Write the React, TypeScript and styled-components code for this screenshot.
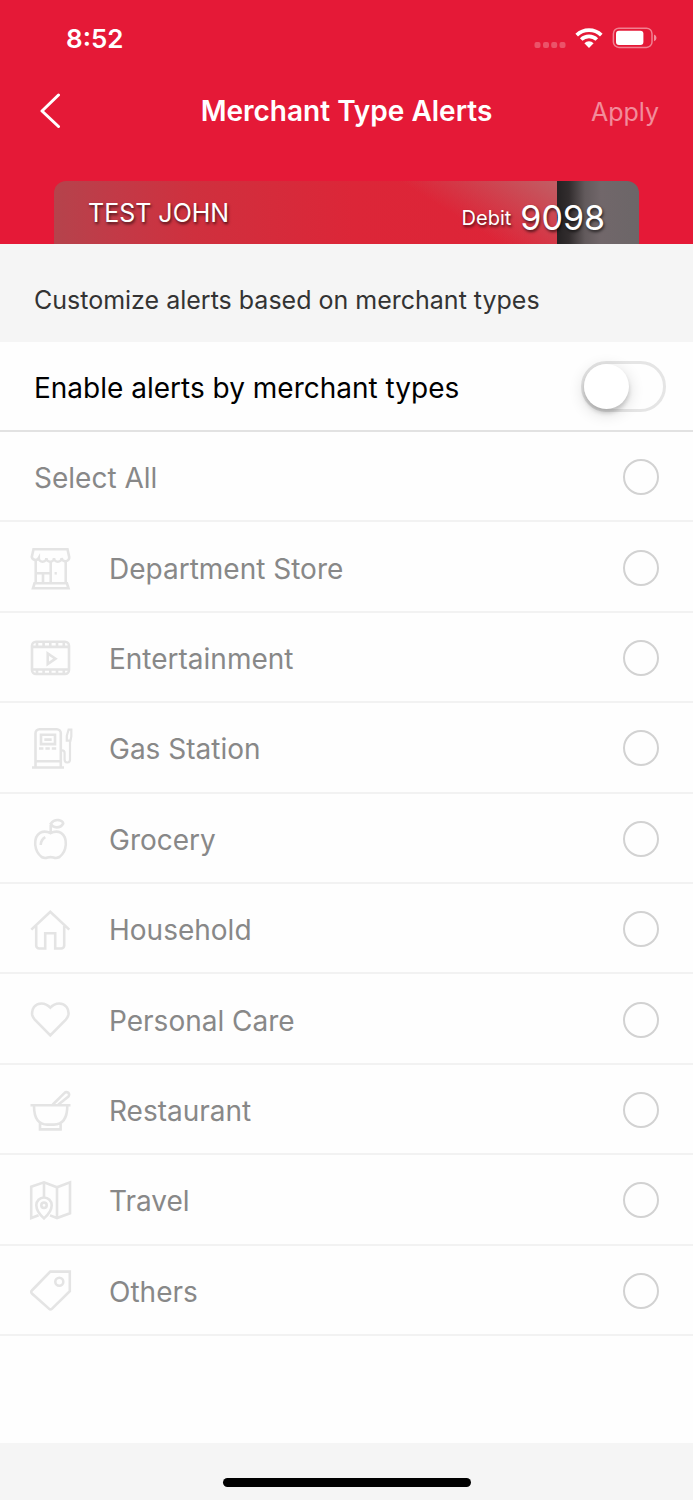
import React from "react";
import styled, { createGlobalStyle } from "styled-components";

const GlobalStyle = createGlobalStyle`
  *, *::before, *::after { box-sizing: border-box; }
  body { margin: 0; background: #fefefe; }
  body, button, input { font-family: Inter, "Liberation Sans", sans-serif; }
`;

const Page = styled.div`
  display: flex;
  flex-direction: column;
  min-height: 100vh;
  background: #fefefe;
`;

const Header = styled.header`
  background: #e51937;
  color: #fff;
`;

const StatusBar = styled.div`
  display: flex;
  align-items: center;
  justify-content: space-between;
  height: 76px;
  padding: 0 36px 0 66px;
`;

const Time = styled.time`
  font-size: 26px;
  font-weight: 600;
`;

const StatusIcons = styled.div`
  display: flex;
  align-items: center;
  gap: 9px;
`;

const NavBar = styled.nav`
  display: grid;
  grid-template-columns: 110px 1fr 110px;
  align-items: center;
  height: 70px;
  padding: 0 34px;
`;

const BackButton = styled.button`
  justify-self: start;
  display: flex;
  padding: 0 4px;
  border: 0;
  background: none;
  color: inherit;
`;

const Title = styled.h1`
  margin: 0;
  font-size: 28px;
  line-height: 36px;
  font-weight: 600;
  text-align: center;
  white-space: nowrap;
`;

const ApplyButton = styled.button`
  justify-self: end;
  padding: 2px 0 0;
  border: 0;
  background: none;
  color: rgba(255, 255, 255, 0.5);
  font-size: 25px;
  line-height: 32px;
`;

const BankCard = styled.section`
  display: flex;
  justify-content: space-between;
  height: 63px;
  margin: 35px 54px 0;
  padding: 0 34px;
  border-radius: 12px 12px 0 0;
  text-shadow: 1px 2px 3px rgba(0, 0, 0, 0.65);
  background:
    linear-gradient(90deg, #252223 0, #322d2e 12px, #625a5c 28px, #71676a 44px, #6c6668 100%) right / 82px 100% no-repeat,
    linear-gradient(32deg, rgba(222, 36, 55, 0) 44%, rgba(190, 100, 105, 0.9) 100%) right 82px top / 180px 100% no-repeat,
    linear-gradient(90deg, #b5434c 0, #c23a47 60px, #cf303e 140px, #dc2638 300px, #df2337 100%);
`;

const Holder = styled.span`
  font-size: 25px;
  line-height: 64px;
`;

const CardNumber = styled.span`
  display: flex;
  align-items: center;
  gap: 9px;
  padding-top: 10px;
  font-size: 20px;
  line-height: 36px;
`;

const Digits = styled.span`
  font-size: 34px;
`;

const Intro = styled.p`
  margin: 0;
  padding: 40px 34px 26px;
  background: #f5f5f5;
  color: #333;
  font-size: 25px;
  line-height: 32px;
`;

const EnableRow = styled.label`
  display: flex;
  align-items: center;
  justify-content: space-between;
  height: 90px;
  padding: 0 27px 0 34px;
  border-bottom: 2px solid #e2e2e2;
  color: #000;
  font-size: 28px;
`;

const EnableText = styled.span`
  padding-top: 4px;
`;

const Toggle = styled.input`
  appearance: none;
  flex: none;
  display: flex;
  width: 85px;
  height: 51px;
  margin: 0;
  border: 3px solid #e5e5e5;
  border-radius: 26px;

  &::before {
    content: "";
    width: 45px;
    height: 45px;
    border-radius: 50%;
    background: #fff;
    box-shadow: 0 4px 4px rgba(0, 0, 0, 0.16), 0 4px 16px rgba(0, 0, 0, 0.16);
  }

  &:checked {
    justify-content: flex-end;
    background: #e51937;
  }
`;

const TypeList = styled.ul`
  display: grid;
  grid-auto-rows: 1fr;
  min-height: 904px;
  margin: 0;
  padding: 0;
  list-style: none;
`;

const TypeItem = styled.li`
  display: flex;
  border-bottom: 2px solid #f2f2f2;
`;

const TypeLabel = styled.label<{ $indent: number }>`
  flex: 1;
  display: flex;
  align-items: center;
  gap: 36px;
  padding: 2px 34px 0 ${(p) => p.$indent}px;
  color: #888;
  font-size: 28px;
`;

const TypeName = styled.span`
  flex: 1;
  padding-top: 2px;
`;

const TypeIcon = styled.svg`
  flex: none;
  width: 44px;
  height: 44px;
  fill: none;
  stroke: #e4e4e4;
  stroke-width: 2.6;
`;

const RoundCheck = styled.input`
  appearance: none;
  flex: none;
  width: 36px;
  height: 36px;
  margin: 0;
  border: 2px solid #d2d2d2;
  border-radius: 50%;

  &:checked {
    background: #e51937;
  }
`;

const Footer = styled.footer`
  display: flex;
  justify-content: center;
  height: 57px;
  margin-top: auto;
  padding-top: 35px;
  background: #f5f5f5;
`;

const HomeIndicator = styled.div`
  width: 248px;
  height: 9px;
  border-radius: 5px;
  background: #000;
`;

const types: { name: string; icon: React.ReactNode }[] = [
  {
    name: "Department Store",
    icon: (
      <>
        <path d="M4.5 3.3H38.5L40.2 11a3.8 3.8 0 0 1-7.6 1 3.8 3.8 0 0 1-7.6 0 3.8 3.8 0 0 1-7.6 0 3.8 3.8 0 0 1-7.6 0 3.8 3.8 0 0 1-7-1z" />
        <path d="M6.7 15v22.3M36.7 15v22.3M21.7 15v22.3M6.7 27.3h15M14 27.3v10M5.5 37.3h32.4L39.5 42.3H4z" />
        <path d="M25.6 27.3h2.2" />
      </>
    ),
  },
  {
    name: "Entertainment",
    icon: (
      <>
        <rect x="3" y="5.8" width="37" height="32.200" rx="4" />
        <path d="M3 10.900h37M3 33.500h37M18.700 17.400v10.600l7.800-5.300z" />
        <path d="M8 5.200v6M14.600 5.200v6M21.300 5.200v6M28 5.200v6M34.800 5.200v6M8 33.200v5M14.600 33.200v5M21.300 33.200v5M28 33.200v5M34.800 33.200v5" />
      </>
    ),
  },
  {
    name: "Gas Station",
    icon: (
      <>
        <path d="M6.5 41V7.2a4 4 0 0 1 4-4h17.3a4 4 0 0 1 4 4V41M3 41.5h32M6.5 35.2h25.3" />
        <path d="M12 8.7h14v9.4H12zM15.3 13.6h7.4M10 22.5h4.4M16.4 22.5h4.4M22.8 22.5h4.4" />
        <path d="M32 24.3h1.2q2.4 0 2.4 2.8v6.4q0 3 2.7 3 2.7 0 2.7-3V14.5M39.6 3.6h2.7v6.8l-.8 4.2h-3.7V9.8z" strokeWidth="2.2" />
      </>
    ),
  },
  {
    name: "Grocery",
    icon: (
      <path d="M21.7 15V8M21.7 6.700Q25 2.500 29.500 3.100 34 4 34.200 6.500 32 10.400 27.700 10.400 23.500 10.300 21.700 6.700zM21.500 16.200Q16 13.200 11 15.800 5.700 19.200 6.200 27.500 7 35.800 12.600 40 15.600 41.600 18.500 40.500 21.500 39.800 24.500 40.500 27.400 41.600 30.500 40 36.200 35.800 36.800 27.500 37.200 19.200 32 15.800 27 13.200 21.500 16.200zM11.700 28Q12 22.500 16.300 20.200" />
    ),
  },
  {
    name: "Household",
    icon: (
      <path d="M2.3 22.6L21.3 4.7 40.3 22.6M7.2 19v19.5a3 3 0 0 0 3 3h6V26.3h10v15.2h6a3 3 0 0 0 3-3V19" />
    ),
  },
  {
    name: "Personal Care",
    icon: (
      <path d="M21.3 9.700Q17.400 5.500 12.500 5.500 7.800 5.600 5 9 2.500 12.400 3.200 16.800 3.700 19.300 5.800 21.600L21.300 37.400 36.800 21.600Q38.900 19.300 39.400 16.800 40.100 12.400 37.600 9 34.800 5.600 30.100 5.500 25.200 5.500 21.300 9.700z" />
    ),
  },
  {
    name: "Restaurant",
    icon: (
      <path d="M1.5 17.2h40M5 17.8Q5 36.6 18.5 36.6h6.3Q38.3 36.6 38.3 17.8M11 35v6.4h20.6V35M23.6 16.7L35.6 4.9a2.5 2.5 0 0 1 3.8 3.6L29.2 16.7" />
    ),
  },
  {
    name: "Travel",
    icon: (
      <>
        <path d="M9.6 37.2L2.2 40V8.7L15 4.3 28 9.3 41 4.3v31L28 40l-7-2.6M15 4.3V19M28 9.3V40" />
        <path d="M15 40.4Q7.3 33.5 7.3 27.2a7.7 7.7 0 0 1 15.4 0Q22.7 33.5 15 40.4z" />
        <circle cx="15" cy="27.3" r="2.7" />
      </>
    ),
  },
  {
    name: "Others",
    icon: (
      <>
        <path d="M21.3 2.600H40.800V22.100L23.100 39.600a2.300 2.300 0 0 1-3.200 0L2.900 24.500a2 2 0 0 1 0-3z" />
        <circle cx="30.3" cy="12.700" r="4" />
      </>
    ),
  },
];

export default function App() {
  return (
    <Page>
      <GlobalStyle />
      <Header>
        <StatusBar>
          <Time>8:52</Time>
          <StatusIcons>
            <svg width="32" height="20" viewBox="0 0 32 20" fill="#fff" opacity="0.25" aria-hidden="true">
              <rect x="0.5" y="14" width="6" height="6" rx="2" />
              <rect x="9" y="14" width="6" height="6" rx="2" />
              <rect x="17.2" y="14" width="6" height="6" rx="2" />
              <rect x="25.5" y="14" width="6" height="6" rx="2" />
            </svg>
            <svg width="28" height="20" viewBox="0 0 28 20" aria-hidden="true">
              <g fill="none" stroke="#fff" strokeWidth="3.7">
                <path d="M1.7 7.1A17.6 17.6 0 0 1 26.3 7.1" />
                <path d="M6.2 11.5A11.2 11.2 0 0 1 21.8 11.5" />
              </g>
              <path d="M9.4 15.2a6.6 6.6 0 0 1 9.2 0L14 19.9z" fill="#fff" />
            </svg>
            <svg width="45" height="22" viewBox="0 0 45 22" aria-hidden="true">
              <rect x="1.4" y="1.2" width="38.6" height="19.2" rx="5.5" fill="none" stroke="#fff" strokeOpacity="0.45" strokeWidth="1.5" />
              <rect x="4" y="3.8" width="27.4" height="14.2" rx="3" fill="#fff" />
              <path d="M42 7.5q2.5 1 2.5 3.4t-2.5 3.4z" fill="#fff" fillOpacity="0.5" />
            </svg>
          </StatusIcons>
        </StatusBar>
        <NavBar>
          <BackButton type="button" aria-label="Back">
            <svg width="24" height="36" viewBox="0 0 24 36" fill="none" stroke="currentColor" strokeWidth="3" strokeLinecap="round" strokeLinejoin="round" aria-hidden="true">
              <path d="M20.5 2L4 18l16.5 15.5" />
            </svg>
          </BackButton>
          <Title>Merchant Type Alerts</Title>
          <ApplyButton type="button" disabled>
            Apply
          </ApplyButton>
        </NavBar>
        <BankCard>
          <Holder>TEST JOHN</Holder>
          <CardNumber>
            Debit <Digits>9098</Digits>
          </CardNumber>
        </BankCard>
      </Header>
      <main>
        <Intro>Customize alerts based on merchant types</Intro>
        <EnableRow>
          <EnableText>Enable alerts by merchant types</EnableText>
          <Toggle type="checkbox" role="switch" />
        </EnableRow>
        <TypeList>
          <TypeItem>
            <TypeLabel $indent={34}>
              <TypeName>Select All</TypeName>
              <RoundCheck type="checkbox" disabled />
            </TypeLabel>
          </TypeItem>
          {types.map(({ name, icon }) => (
            <TypeItem key={name}>
              <TypeLabel $indent={29}>
                <TypeIcon viewBox="0 0 44 44" aria-hidden="true">
                  {icon}
                </TypeIcon>
                <TypeName>{name}</TypeName>
                <RoundCheck type="checkbox" disabled />
              </TypeLabel>
            </TypeItem>
          ))}
        </TypeList>
      </main>
      <Footer>
        <HomeIndicator />
      </Footer>
    </Page>
  );
}
